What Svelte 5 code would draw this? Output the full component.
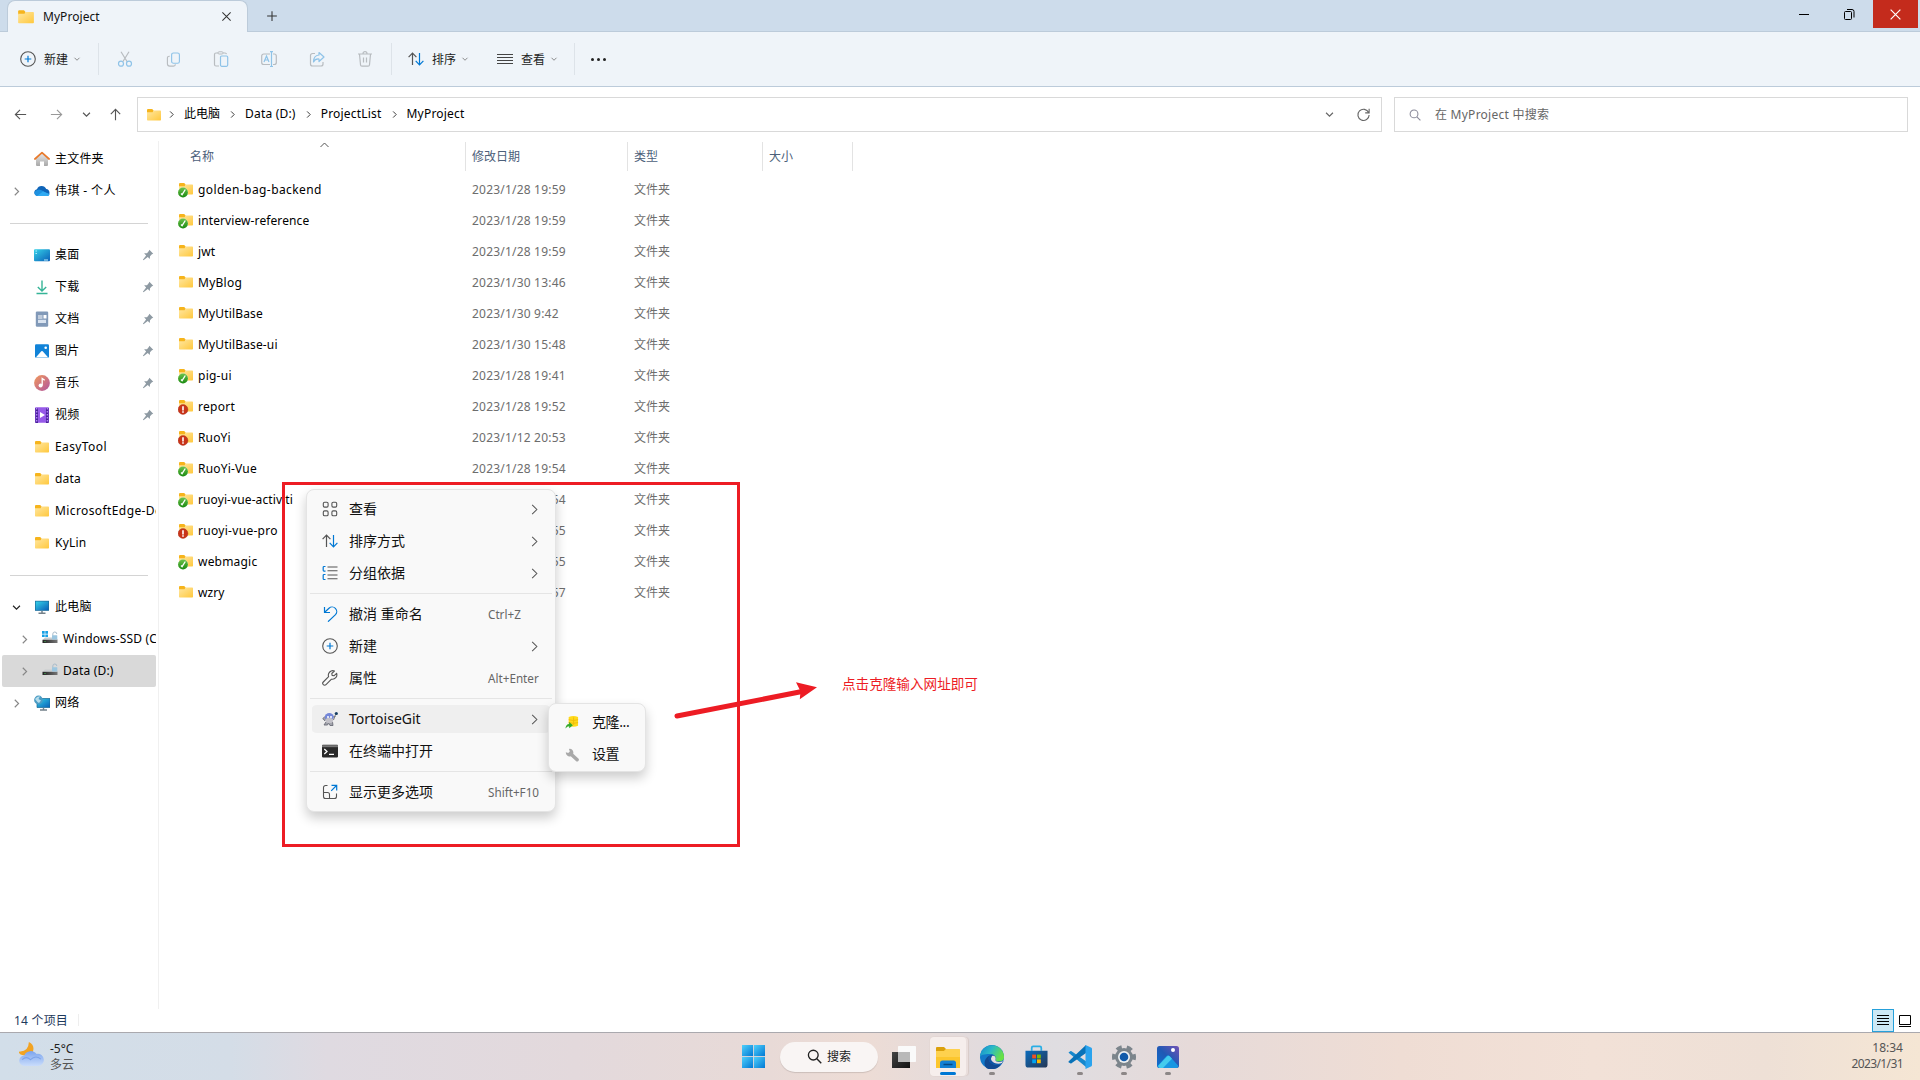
<script>
  // name, modified, badge, letter spacing of the name in px
  const files = [
    ['golden-bag-backend', '2023/1/28 19:59', 'ok', 0.42],
    ['interview-reference', '2023/1/28 19:59', 'ok', 0.1],
    ['jwt', '2023/1/28 19:59', '', 0.1],
    ['MyBlog', '2023/1/30 13:46', '', 0.25],
    ['MyUtilBase', '2023/1/30 9:42', '', 0.15],
    ['MyUtilBase-ui', '2023/1/30 15:48', '', 0.15],
    ['pig-ui', '2023/1/28 19:41', 'ok', 0.25],
    ['report', '2023/1/28 19:52', 'bad', 0.3],
    ['RuoYi', '2023/1/12 20:53', 'bad', 0.15],
    ['RuoYi-Vue', '2023/1/28 19:54', 'ok', 0.2],
    ['ruoyi-vue-activiti', '2023/1/28 19:54', 'ok', 0.1],
    ['ruoyi-vue-pro', '2023/1/28 19:55', 'bad', 0.3],
    ['webmagic', '2023/1/28 19:55', 'ok', 0.2],
    ['wzry', '2023/1/28 19:57', '', 0.1]
  ];
  const tools = ['cut', 'copy', 'paste', 'rename', 'share', 'trash'];
  const side = [
    { icon: 'home', label: '主文件夹' },
    { icon: 'cloud', label: '伟琪 - 个人', chev: 'right', wide: true },
    null,
    { icon: 'desktop', label: '桌面', pin: true },
    { icon: 'download', label: '下载', pin: true },
    { icon: 'doc', label: '文档', pin: true },
    { icon: 'image', label: '图片', pin: true },
    { icon: 'music', label: '音乐', pin: true },
    { icon: 'video', label: '视频', pin: true },
    { icon: 'folder', label: 'EasyTool', wide: true },
    { icon: 'folder', label: 'data' },
    { icon: 'folder', label: 'MicrosoftEdge-Dev', wide: true },
    { icon: 'folder', label: 'KyLin' },
    null,
    { icon: 'pc', label: '此电脑', chev: 'down' },
    { icon: 'ssd', label: 'Windows-SSD (C:)', chev: 'right', nested: true },
    { icon: 'disk', label: 'Data (D:)', chev: 'right', nested: true, selected: true },
    { icon: 'network', label: '网络', chev: 'right' }
  ];
  const menu = [
    { icon: 'grid', label: '查看', sub: true },
    { icon: 'sort', label: '排序方式', sub: true },
    { icon: 'group', label: '分组依据', sub: true },
    null,
    { icon: 'undo', label: '撤消 重命名', key: 'Ctrl+Z' },
    { icon: 'new', label: '新建', sub: true },
    { icon: 'wrench', label: '属性', key: 'Alt+Enter' },
    null,
    { icon: 'tortoise', label: 'TortoiseGit', sub: true, hover: true },
    { icon: 'terminal', label: '在终端中打开' },
    null,
    { icon: 'more', label: '显示更多选项', key: 'Shift+F10' }
  ];
  const crumbs = ['此电脑', 'Data (D:)', 'ProjectList', 'MyProject'];
  const apps = ['edge', 'store', 'vscode', 'settings', 'photos'];
</script>

{#snippet icon(name, size = 16)}
  <svg class="icon" width={size} height={size} viewBox="0 0 16 16"><use href="#{name}" /></svg>
{/snippet}

<svg class="defs" aria-hidden="true">
  <defs>
    <linearGradient id="gFolder" x1="0" y1="0" x2="1" y2="1"><stop offset="0" stop-color="#ffe7a2" /><stop offset="1" stop-color="#ffc83d" /></linearGradient>
    <linearGradient id="gBlue" x1="0" y1="0" x2="1" y2="1"><stop offset="0" stop-color="#35d2e8" /><stop offset="1" stop-color="#0a5fb8" /></linearGradient>
    <linearGradient id="gWin" x1="0" y1="0" x2="1" y2="1"><stop offset="0" stop-color="#4fd0fb" /><stop offset="1" stop-color="#0078d4" /></linearGradient>
    <linearGradient id="gGreen" x1="0" y1="0" x2="0" y2="1"><stop offset="0" stop-color="#6cc24a" /><stop offset="1" stop-color="#1a8a12" /></linearGradient>
    <linearGradient id="gMusic" x1="0" y1="0" x2="1" y2="1"><stop offset="0" stop-color="#f29a5c" /><stop offset="1" stop-color="#b0549f" /></linearGradient>
    <linearGradient id="gCloud" x1="0" y1="0" x2="0" y2="1"><stop offset="0" stop-color="#7ba4ee" /><stop offset="1" stop-color="#c9dcfb" /></linearGradient>
    <linearGradient id="gEdge" x1="0" y1="0" x2="1" y2=".4"><stop offset="0" stop-color="#1589cf" /><stop offset=".5" stop-color="#2bb9c6" /><stop offset="1" stop-color="#68e045" /></linearGradient>
    <linearGradient id="gDark" x1="0" y1="0" x2="1" y2="1"><stop offset="0" stop-color="#444" /><stop offset="1" stop-color="#111" /></linearGradient>
    <linearGradient id="gHouse" x1="0" y1="0" x2="0" y2="1"><stop offset="0" stop-color="#e8e8e8" /><stop offset="1" stop-color="#a8a8a8" /></linearGradient>
    <linearGradient id="gStore" x1="0" y1="0" x2="1" y2="1"><stop offset="0" stop-color="#0a6cbd" /><stop offset="1" stop-color="#263855" /></linearGradient>
    <linearGradient id="gPhoto" x1="0" y1="1" x2="1" y2="0"><stop offset="0" stop-color="#0d70cf" /><stop offset=".5" stop-color="#2059b5" /><stop offset="1" stop-color="#7352b4" /></linearGradient>
    <linearGradient id="gGrayDisk" x1="0" y1="0" x2="1" y2="0"><stop offset="0" stop-color="#222" /><stop offset="1" stop-color="#777" /></linearGradient>

    <symbol id="folder" viewBox="0 0 16 16"><path d="M1 3a1 1 0 0 1 1-1h4.200l1.300 1.600V6H1z" fill="#f6b41c" /><path d="M1 5.200h5.500l1.500-1.700h6.300a.7.700 0 0 1 .7.700v8.600a.7.700 0 0 1-.7.700H1.700a.7.700 0 0 1-.7-.7z" fill="url(#gFolder)" /></symbol>
    <symbol id="ok" viewBox="0 0 16 16"><circle cx="5" cy="10.500" r="5.100" fill="#e8f4dc" /><circle cx="5" cy="10.500" r="4.900" fill="url(#gGreen)" /><path d="M3 11.500l1.100 1.200L7.300 7.500" fill="none" stroke="#fff" stroke-width="1.300" /></symbol>
    <symbol id="bad" viewBox="0 0 16 16"><circle cx="5" cy="10.500" r="4.900" fill="#c93419" stroke="#a12a17" stroke-width=".4" /><path d="M5 7.200v4.200M5 12.300v1.500" stroke="#fff" stroke-width="1.600" /></symbol>
    <symbol id="home" viewBox="0 0 16 16"><path d="M2 7.500L8 2.200l6 5.300V14a1 1 0 0 1-1 1H10v-4.500H6V15H3a1 1 0 0 1-1-1z" fill="url(#gHouse)" /><path d="M.9 8L8 1.600 15.100 8" fill="none" stroke="#e87a2c" stroke-width="1.700" stroke-linecap="round" stroke-linejoin="round" /></symbol>
    <symbol id="cloud" viewBox="0 0 16 16"><path d="M3.500 13A3.400 3.400 0 0 1 3 6.300 5 5 0 0 1 12.200 6 3.600 3.600 0 0 1 13 13z" fill="#0f64b8" /><path d="M3.500 13A3.400 3.400 0 0 1 0.500 9Q4 4.500 9 8l6.500 3.500Q14.500 13 13 13z" fill="#1e91e0" /><path d="M3 13l6-4.500 6.500 2.500Q14.800 13 13 13z" fill="#30aaf2" /></symbol>
    <symbol id="desktop" viewBox="0 0 16 16"><rect y="2.300" width="16" height="12" rx="1" fill="url(#gBlue)" /><path d="M1.500 4h1.400M1.500 6.500h1.400M10 13h4" stroke="#bdf2ff" stroke-width="1" /></symbol>
    <symbol id="download" viewBox="0 0 16 16"><path d="M8 1.500v10M3.800 8L8 12l4.200-4M2.500 14.500h11" fill="none" stroke="#35b497" stroke-width="1.400" /></symbol>
    <symbol id="doc" viewBox="0 0 16 16"><rect x="1.800" y=".5" width="12.400" height="15.200" rx="1.200" fill="#8199b8" /><path d="M4 5h4.500M4 7h4.500" stroke="#fff" /><rect x="9.500" y="4" width="3" height="3.500" fill="#fff" /><rect x="4" y="8.800" width="8" height="3.200" fill="#d9e3f0" /></symbol>
    <symbol id="image" viewBox="0 0 16 16"><rect x="1" y="1.300" width="14" height="13.500" rx="1.200" fill="#1183d8" /><path d="M1.800 14.500L7.300 8.300a1 1 0 0 1 1.400 0l5.500 6.200z" fill="#fff" /><circle cx="11.700" cy="4.700" r="1.300" fill="#fff" /></symbol>
    <symbol id="music" viewBox="0 0 16 16"><circle cx="8" cy="8" r="7.900" fill="url(#gMusic)" /><circle cx="6.600" cy="10.600" r="2" fill="#fff" /><path d="M8.200 10.500V3.500l2.500 1.800" stroke="#fff" stroke-width="1.300" fill="none" /></symbol>
    <symbol id="video" viewBox="0 0 16 16"><rect x="1" y=".3" width="14" height="15.500" rx="1" fill="#9659e8" /><path d="M2.700 1v15M13.300 1v15" stroke="#4a219b" stroke-width="2.600" /><path d="M2.700 1v15M13.300 1v15" stroke="#b68bf4" stroke-width="1.300" stroke-dasharray="1.400 1.600" /><path d="M6 5v6l5-3z" fill="#fff" /></symbol>
    <symbol id="pin" viewBox="0 0 16 16"><path d="M9.800 1l5.200 5.200-1.800.8-2.500 2.500-.3 3.700-2.700-2.500L2 15l-.8-.8L5.500 8.500 2.800 5.800l3.900-.3 2.400-2.700z" fill="#8e9aa3" /></symbol>
    <symbol id="pc" viewBox="0 0 16 16"><path d="M1 1.800h14v10H1z" fill="#1b6c9d" /><path d="M1.700 2.500h12.600v8.600H1.700z" fill="url(#gBlue)" /><path d="M8 12v2M4.500 14.300h7" stroke="#74818a" stroke-width="1.500" /></symbol>
    <symbol id="disk" viewBox="0 0 16 16"><path d="M3 6.500h10.500L16 9H.5z" fill="#c9cdd0" /><rect x=".5" y="8.800" width="15" height="3.200" fill="url(#gGrayDisk)" /><circle cx="3" cy="10.500" r=".6" fill="#50d860" /><path d="M10.800 4.800V3a2 2 0 0 1 4 0" fill="none" stroke="#a9bccb" stroke-width="1" /><rect x="10" y="4.300" width="5.300" height="4.300" rx=".5" fill="#9bc6e0" /></symbol>
    <symbol id="ssd" viewBox="0 0 16 16"><use href="#disk" /><path d="M0 .1h2.700v2.700H0zM3.300.1H6v2.700H3.300zM0 3.400h2.700v2.700H0zM3.300 3.400H6v2.700H3.300z" fill="#18a0e5" /></symbol>
    <symbol id="network" viewBox="0 0 16 16"><path d="M3 3.500h13v9H3z" fill="url(#gBlue)" stroke="#176892" stroke-width=".7" /><path d="M9.500 13v1.500M6 15h7" stroke="#74818a" stroke-width="1.400" /><circle cx="4.500" cy="5" r="4.400" fill="#4c9cc4" /><path d="M1 4Q3 1 6 1.200L4.500 4 7 5.500 5 8Q3 7 1 4" fill="#b5dceb" /></symbol>

    <symbol id="new" viewBox="0 0 16 16"><circle cx="8" cy="8" r="7.300" fill="none" stroke="#555" stroke-width="1.100" /><path d="M8 4.700v6.600M4.700 8h6.600" stroke="#0078d4" stroke-width="1.200" /></symbol>
    <symbol id="cut" viewBox="0 0 16 16"><path d="M4 .8l6.200 10M12 .8L5.800 10.800" fill="none" stroke="#b8bcc0" stroke-width="1.200" /><g fill="none" stroke="#8fc3e8" stroke-width="1.200"><circle cx="4" cy="12.700" r="2.500" /><circle cx="12" cy="12.700" r="2.500" /></g></symbol>
    <symbol id="copy" viewBox="0 0 16 16"><path d="M4 4.500H3.500a2 2 0 0 0-2 2v6a2.500 2.500 0 0 0 2.500 2.500h4a2 2 0 0 0 2-2" fill="none" stroke="#b8bcc0" stroke-width="1.200" /><rect x="6" y="1" width="8.300" height="11" rx="2" fill="none" stroke="#8fc3e8" stroke-width="1.200" /></symbol>
    <symbol id="paste" viewBox="0 0 16 16"><path d="M5 2H3a1.500 1.500 0 0 0-1.500 1.500v10A1.500 1.500 0 0 0 3 15h3M10 2h2a1.500 1.500 0 0 1 1.500 1.200" fill="none" stroke="#b8bcc0" stroke-width="1.200" /><rect x="5" y=".8" width="5" height="2.200" rx="1" fill="none" stroke="#b8bcc0" /><rect x="7.500" y="5" width="7.200" height="10.300" rx="1.200" fill="none" stroke="#8fc3e8" stroke-width="1.200" /></symbol>
    <symbol id="rename" viewBox="0 0 16 16"><path d="M9 3H2.700A2 2 0 0 0 .7 5v6.500a2 2 0 0 0 2 2H9M12 3h1.300a2 2 0 0 1 2 2v6.500a2 2 0 0 1-2 2H12" fill="none" stroke="#b8bcc0" stroke-width="1.200" /><path d="M3 11l2.500-6L8 11M3.800 9h3.400M10.500 1v14.500M9 .7h3M9 15.500h3" fill="none" stroke="#8fc3e8" stroke-width="1.200" /></symbol>
    <symbol id="share" viewBox="0 0 16 16"><path d="M6 2.500H3.500a2 2 0 0 0-2 2V13a2 2 0 0 0 2 2H12a2 2 0 0 0 2-2v-2" fill="none" stroke="#b8bcc0" stroke-width="1.200" /><path d="M10 1.500L15 6l-5 4.500V8Q6 7.700 4.500 11 4.500 4.500 10 4z" fill="none" stroke="#8fc3e8" stroke-width="1.200" stroke-linejoin="round" /></symbol>
    <symbol id="trash" viewBox="0 0 16 16"><path d="M1 3h14M6 2.700a2 2 0 0 1 4 0M2.500 3.200l1 10.600a1.500 1.500 0 0 0 1.500 1.400h6a1.500 1.500 0 0 0 1.500-1.400l1-10.600M6.500 6.500v5M9.500 6.500v5" fill="none" stroke="#b8bcc0" stroke-width="1.200" /></symbol>
    <symbol id="sort" viewBox="0 0 16 16"><path d="M4.500 14V2.300M.6 6.200l3.900-4 3.900 4" fill="none" stroke="#555" stroke-width="1.200" /><path d="M11.500 2v11.700M7.700 9.800l3.800 4 3.900-4" fill="none" stroke="#0078d4" stroke-width="1.200" /></symbol>
    <symbol id="lines" viewBox="0 0 16 16"><path d="M0 3.500h16M0 6.500h16M0 9.500h16M0 12.500h16" stroke="#444" /></symbol>
    <symbol id="left" viewBox="0 0 16 16"><path d="M14 8H2.500M7.500 3L2.500 8l5 5" fill="none" stroke="currentColor" stroke-width="1.200" /></symbol>
    <symbol id="right" viewBox="0 0 16 16"><path d="M2 8h11.500M8.500 3l5 5-5 5" fill="none" stroke="currentColor" stroke-width="1.200" /></symbol>
    <symbol id="up" viewBox="0 0 16 16"><path d="M8 14V2.500M3 7.500l5-5 5 5" fill="none" stroke="currentColor" stroke-width="1.200" /></symbol>
    <symbol id="cdown" viewBox="0 0 16 16"><path d="M3 5.500l5 5 5-5" fill="none" stroke="currentColor" stroke-width="1.700" /></symbol>
    <symbol id="cright" viewBox="0 0 16 16"><path d="M5.500 2.500L11 8l-5.500 5.500" fill="none" stroke="currentColor" stroke-width="1.700" /></symbol>
    <symbol id="thin" viewBox="0 0 16 16"><path d="M5.500 3l5 5-5 5" fill="none" stroke="currentColor" stroke-width="1.100" /></symbol>
    <symbol id="refresh" viewBox="0 0 16 16"><path d="M13.500 6A6 6 0 1 0 14 8.500M14 1.800v4.400H9.800" fill="none" stroke="#666" stroke-width="1.200" /></symbol>
    <symbol id="search" viewBox="0 0 16 16"><circle cx="6.700" cy="6.500" r="5.200" fill="none" stroke="currentColor" stroke-width="1.400" /><path d="M10.500 10.500l4.700 4.700" stroke="currentColor" stroke-width="1.500" /></symbol>
    <symbol id="x" viewBox="0 0 16 16"><path d="M2 2l12 12M14 2L2 14" stroke="currentColor" stroke-width="1.500" /></symbol>
    <symbol id="plus" viewBox="0 0 16 16"><path d="M8 1.500v13M1.500 8h13" stroke="#333" stroke-width="1.400" /></symbol>

    <symbol id="grid" viewBox="0 0 16 16"><g fill="none" stroke="#555" stroke-width="1.100"><rect x="1.300" y="1.300" width="4.800" height="4.800" rx="1.300" /><rect x="9.900" y="1.300" width="4.800" height="4.800" rx="1.300" /><rect x="1.300" y="9.900" width="4.800" height="4.800" rx="1.300" /><rect x="9.900" y="9.900" width="4.800" height="4.800" rx="1.300" /></g></symbol>
    <symbol id="group" viewBox="0 0 16 16"><path d="M3.500 1.500h-1.500a.8.800 0 0 0-.8.800v3a.8.800 0 0 0 .8.800h1.500M3.500 9.500h-1.500a.8.800 0 0 0-.8.800v3.400a.8.800 0 0 0 .8.800h1.500" fill="none" stroke="#0078d4" stroke-width="1.200" /><path d="M5.500 2h10M5.500 5.700h10M5.500 10h10M5.500 13.700h10" stroke="#555" stroke-width="1.100" /></symbol>
    <symbol id="undo" viewBox="0 0 16 16"><path d="M2.500 1v5.500H8M2.700 6.200L7 2.200a4.600 4.600 0 0 1 6.500 6.500L6 15.700" fill="none" stroke="#0078d4" stroke-width="1.200" /></symbol>
    <symbol id="wrench" viewBox="0 0 16 16"><path d="M14.600 3.300l-2.700 2.500-1.800-.4-.3-1.900L12.400 1A4.500 4.500 0 0 0 6.600 6.700L1.300 12a1.900 1.900 0 0 0 2.700 2.700l5.500-5.500a4.500 4.500 0 0 0 5.100-5.900z" fill="none" stroke="#555" stroke-width="1.100" stroke-linejoin="round" /></symbol>
    <symbol id="tortoise" viewBox="0 0 16 16"><path d="M3 10L.8 7.500 2.500 6l3 2M10 6l3.500-.5M4 11l-2 3h3.500l1-2 1.500 2.500h3L10.500 11" fill="#a2a4ac" stroke="#6b6d78" stroke-width=".9" /><ellipse cx="7.300" cy="6" rx="4.500" ry="4" fill="#7487d8" /><ellipse cx="7.300" cy="9.500" rx="3.800" ry="2.800" fill="#c2c1c8" /><circle cx="6" cy="6" r="1" fill="#fff" /><circle cx="9" cy="6" r="1" fill="#fff" /><path d="M11.500 9l2-5.500" stroke="#777" /><circle cx="14.300" cy="2.500" r="1.600" fill="#173f63" /></symbol>
    <symbol id="terminal" viewBox="0 0 16 16"><rect y="1.800" width="16" height="12.600" rx=".8" fill="#292929" /><path d="M0 3.200h16" stroke="#777" stroke-width="2" /><path d="M2.300 6l2.700 2.500L2.300 11M7 11.300h5" fill="none" stroke="#fff" stroke-width="1.300" /></symbol>
    <symbol id="more" viewBox="0 0 16 16"><path d="M5.500 1.500H3.500a2 2 0 0 0-2 2v9a2 2 0 0 0 2 2h9a2 2 0 0 0 2-2V9.500M1.500 8.500h4a2 2 0 0 1 2 2v4" fill="none" stroke="#555" stroke-width="1.100" /><path d="M9.200 6.800l5.300-5.300M9.500 1.300h5.200v5.200" fill="none" stroke="#0078d4" stroke-width="1.200" /></symbol>
    <symbol id="clone" viewBox="0 0 16 16"><path d="M5 2.200Q10 0 15 2.200v9.300q-5 2-10 0z" fill="#ffd91a" /><path d="M5 5q5 1.800 10 0M5 8q5 1.800 10 0M10.200 2.500v8" fill="none" stroke="#efbd0b" /><path d="M1.500 14.500Q2 9.500 5.500 9.500V7.500l4 3.500-4 3v-2Q3.500 12 1.500 14.500" fill="#35ab2b" /></symbol>
    <symbol id="spanner" viewBox="0 0 16 16"><path d="M2 5.500l2.500.8 1.700-1.600-.9-2.700a4 4 0 0 1 4.500 5.100l5.500 5.200a1.800 1.800 0 0 1-2.600 2.600L7.200 9.800A4 4 0 0 1 2 5.500" fill="#a9a9a9" /></symbol>

    <symbol id="windows" viewBox="0 0 16 16"><rect width="7.700" height="7.700" fill="url(#gWin)" /><rect x="8.300" width="7.700" height="7.700" fill="url(#gWin)" /><rect y="8.300" width="7.700" height="7.700" fill="url(#gWin)" /><rect x="8.300" y="8.300" width="7.700" height="7.700" fill="url(#gWin)" /></symbol>
    <symbol id="tasks" viewBox="0 0 24 24"><rect y="7" width="18" height="16" fill="url(#gDark)" /><rect x="6" y="1" width="18" height="16" rx=".7" fill="#fafafa" /><path d="M6 7h12v10H6z" fill="#b9b9b9" /></symbol>
    <symbol id="explorer" viewBox="0 0 24 24"><path d="M0 3a1 1 0 0 1 1-1h7l2 2v4H0z" fill="#dba00c" /><path d="M0 6h8l2-2h13a1 1 0 0 1 1 1v18H0z" fill="#fcc62d" /><path d="M0 6h8l2-2h13a1 1 0 0 1 1 1v7H0z" fill="#ffd55c" opacity=".7" /><path d="M4 23v-5a2.500 2.500 0 0 1 2.500-2.500h11A2.500 2.500 0 0 1 20 18v5z" fill="#1380d4" /><path d="M7.500 19.500h9" stroke="#064983" stroke-width="1.500" /></symbol>
    <symbol id="edge" viewBox="0 0 24 24"><circle cx="12" cy="12" r="12" fill="#1379c9" /><path d="M0 12A12 12 0 0 1 24 12.500c0 5-9 5-8.500 2.500.8-3.500-1.500-6-5-6S1 9 0 12" fill="url(#gEdge)" /><path d="M8.500 24C3 22 3 14 9.500 10.500 6.500 17 13 21.500 21 19.500 18 23.500 13 25 8.500 24" fill="#124a91" /><path d="M9.500 10.500c3-2 7 .5 6 4-.4 1 .3 2 2 2.300L23.500 16l-2 3c-6 2-13-.5-13-5 0-1.500.5-2.500 1-3.500" fill="#1053a3" /><path d="M12 11c2.500-1 4.300 1.300 3.500 3.500-.5 2 2 3.500 7.500 1.800l-1 1.700c-6 2-11-1-11-4.500z" fill="#e4dfe0" /></symbol>
    <symbol id="store" viewBox="0 0 24 24"><path d="M7 6V3a1.500 1.500 0 0 1 1.500-1.500h7A1.500 1.500 0 0 1 17 3v3" fill="none" stroke="#28aee5" stroke-width="1.800" /><path d="M.5 6h23v14.500a3 3 0 0 1-3 3h-17a3 3 0 0 1-3-3z" fill="url(#gStore)" /><path d="M7.500 10h4v4h-4z" fill="#f25022" /><path d="M12.500 10h4v4h-4z" fill="#7fba00" /><path d="M7.500 15h4v4h-4z" fill="#00a4ef" /><path d="M12.500 15h4v4h-4z" fill="#ffb900" /></symbol>
    <symbol id="vscode" viewBox="0 0 24 24"><path d="M1.500 8.500L18 22l4-3L3.500 6.200a1 1 0 0 0-1.200 0L.5 7.500z" fill="#1688cd" /><path d="M.5 16.500L18 0v8L3.500 18.200a1 1 0 0 1-1.200 0l-1.800-1z" fill="#0872b8" /><path d="M17.500 0L23 2.500a1.500 1.500 0 0 1 1 1.400v16.200a1.500 1.500 0 0 1-1 1.400L17.500 24z" fill="#2aa3ee" /></symbol>
    <symbol id="settings" viewBox="0 0 24 24"><circle cx="12" cy="12" r="9" fill="#7c858c" /><circle cx="12" cy="12" r="10" fill="none" stroke="#7c858c" stroke-width="4" stroke-dasharray="5.500 4.970" transform="rotate(-16 12 12)" /><circle cx="12" cy="12" r="6" fill="#edf0f2" /><circle cx="12" cy="12" r="4.300" fill="#125baa" /></symbol>
    <symbol id="photos" viewBox="0 0 24 24"><rect x="1" y="1" width="22" height="22" rx="2.500" fill="url(#gPhoto)" /><path d="M1.500 21L10.500 11a2 2 0 0 1 3 0l9 10-1.500 2H3z" fill="#1796e2" /><path d="M2 21l9-9.500a2 2 0 0 1 3 0l2 2.200L7 23H3.500z" fill="#43cbed" /><circle cx="17" cy="5" r="2" fill="#fff" /></symbol>
    <symbol id="weather" viewBox="0 0 24 24"><path d="M9.500 0q6 3 3.800 9.500Q9 15 1.500 12-1 10 .5 9 9 9.500 9.500 0" fill="#f2a322" /><path d="M5.500 23A5 5 0 0 1 5 13a7 7 0 0 1 12-1.500A5.800 5.800 0 1 1 18 23z" fill="url(#gCloud)" /><path d="M3 17q4-4 8 0 5-5 10-.5" fill="none" stroke="#7ca3e9" stroke-width="1" /></symbol>
  </defs>
</svg>

<div class="screen">
  <header class="titlebar">
    <div class="tab">
      {@render icon('folder', 18)}<span>MyProject</span>
      <i class="tabclose">{@render icon('x', 11)}</i>
    </div>
    <i class="plus">{@render icon('plus', 12)}</i>
    <div class="controls">
      <span class="ctl"><svg width="11" height="11"><path d="M0 5.500h10" stroke="#000" /></svg></span>
      <span class="ctl"><svg width="11" height="11"><rect x=".5" y="2.500" width="7" height="8" rx="1" fill="none" stroke="#000" /><path d="M3 .5h5a2 2 0 0 1 2 2V8.500" fill="none" stroke="#000" /></svg></span>
      <span class="ctl close">{@render icon('x', 13)}</span>
    </div>
  </header>

  <div class="toolbar">
    <div class="cmd new">{@render icon('new')}<span>新建</span>{@render icon('cdown', 8)}</div>
    <div class="tools">
      {#each tools as t}<span>{@render icon(t, t === 'copy' ? 15 : 16)}</span>{/each}
    </div>
    <div class="cmd sortcmd">{@render icon('sort')}<span>排序</span>{@render icon('cdown', 8)}</div>
    <div class="cmd viewcmd">{@render icon('lines')}<span>查看</span>{@render icon('cdown', 8)}</div>
    <div class="dots"><b></b><b></b><b></b></div>
  </div>

  <div class="nav">
    <div class="arrows">
      <span>{@render icon('left', 15)}</span>
      <span class="dim">{@render icon('right', 15)}</span>
      <span>{@render icon('cdown', 11)}</span>
      <span>{@render icon('up', 15)}</span>
    </div>
    <div class="address">
      {@render icon('folder')}
      {#each crumbs as c}
        <i>{@render icon('cright', 9)}</i><span>{c}</span>
      {/each}
      <div class="addrend">{@render icon('cdown', 11)}{@render icon('refresh', 15)}</div>
    </div>
    <div class="searchbox">{@render icon('search', 12)}<span>在 MyProject 中搜索</span></div>
  </div>

  <main>
    <aside>
      {#each side as s}
        {#if s}
          <div class="item" class:nested={s.nested} class:selected={s.selected}>
            <span class="chev" class:dark={s.chev === 'down'}>{#if s.chev}{@render icon(s.chev === 'down' ? 'cdown' : 'cright', 11)}{/if}</span>
            {@render icon(s.icon)}
            <span class="label" class:wide={s.wide}>{s.label}</span>
            {#if s.pin}<span class="pin">{@render icon('pin', 12)}</span>{/if}
          </div>
        {:else}
          <div class="rule"></div>
        {/if}
      {/each}
    </aside>

    <section class="list">
      <div class="head">
        <span class="h-name">名称<i class="caret"><svg width="9" height="6"><path d="M.5 5l4-4 4 4" fill="none" stroke="#555" /></svg></i></span>
        <span>修改日期</span><span>类型</span><span>大小</span>
      </div>
      {#each files as [name, date, state, spacing]}
        <div class="row">
          <span class="name" style:letter-spacing="{spacing}px">
            <svg width="16" height="18" viewBox="0 0 16 18"><use href="#folder" width="16" height="16" />{#if state}<use href="#{state}" y="1" width="16" height="16" />{/if}</svg>
            {name}
          </span>
          <span class="date">{date}</span><span>文件夹</span>
        </div>
      {/each}
    </section>
  </main>

  <footer class="status">
    <span class="count">14 个项目</span>
    <span class="view on"><svg width="12" height="11"><path d="M0 .5h12M0 3.500h12M0 6.500h12M0 9.500h12" stroke="#000" /></svg></span>
    <span class="view"><svg width="12" height="12"><path d="M.5.500h11v9H.5zM0 11.500h12" fill="none" stroke="#000" /></svg></span>
  </footer>

  <div class="taskbar">
    <div class="weather">{@render icon('weather', 25)}<div><b>-5°C</b><span>多云</span></div></div>
    <div class="apps">
      <span class="start">{@render icon('windows', 23)}</span>
      <div class="pill">{@render icon('search', 15)}<span>搜索</span></div>
      <span class="app">{@render icon('tasks', 24)}</span>
      <span class="app active">{@render icon('explorer', 24)}<i></i></span>
      {#each apps as a}
        <span class="app">{@render icon(a, a === 'store' ? 23 : 24)}{#if a !== 'store'}<i></i>{/if}</span>
      {/each}
    </div>
    <div class="clock"><span>18:34</span><span class="day">2023/1/31</span></div>
  </div>

  <div class="menu">
    {#each menu as m}
      {#if m}
        <div class="mi" class:hover={m.hover}>
          {@render icon(m.icon)}<span>{m.label}</span>
          {#if m.key}<kbd>{m.key}</kbd>{/if}
          {#if m.sub}<em>{@render icon('thin', 15)}</em>{/if}
        </div>
      {:else}
        <hr />
      {/if}
    {/each}
  </div>
  <div class="submenu">
    <div class="mi">{@render icon('clone', 15)}<span>克隆...</span></div>
    <div class="mi">{@render icon('spanner', 15)}<span>设置</span></div>
  </div>

  <div class="frame"></div>
  <svg class="arrow" width="150" height="50"><path d="M7 36L132 11.500" stroke="#ed1c24" stroke-width="5" stroke-linecap="round" /><path d="M126 2.300l21 5-17.200 12 .7-8z" fill="#ed1c24" /></svg>
  <div class="note">点击克隆输入网址即可</div>
</div>

<style>
  :global(body) { margin: 0; overflow: hidden; }
  .defs { position: absolute; width: 0; height: 0; }
  .screen { position: relative; width: 1920px; height: 1080px; display: flex; flex-direction: column; overflow: hidden; background: #fff; color: #000; font: 12px/16px "Noto Sans", "Noto Sans CJK SC", sans-serif; white-space: nowrap; box-sizing: border-box; }
  .screen * { box-sizing: border-box; }
  svg { display: block; flex: none; }
  i, em { font-style: normal; }

  .titlebar { height: 32px; flex: none; display: flex; background: #cddceb; border-bottom: 1px solid #bccbda; padding-left: 7px; }
  .tab { width: 241px; height: 32px; display: flex; align-items: center; padding: 0 15px 0 9px; background: #eff4f9; border: 1px solid #bccbda; border-bottom: 0; border-radius: 8px 8px 0 0; color: #111; }
  .tab span { margin-left: 8px; letter-spacing: .05px; }
  .tabclose { margin-left: auto; color: #333; }
  .plus { margin: 10px 0 0 18px; }
  .controls { margin-left: auto; display: flex; padding-right: 2px; }
  .ctl { width: 45px; height: 28px; display: grid; place-items: center; padding-right: 2px; }
  .close { background: #c42b1c; color: #fff; padding-right: 1px; }

  .toolbar { height: 55px; flex: none; display: flex; align-items: center; background: #eff4f9; border-bottom: 1px solid #bccbda; }
  .cmd { display: flex; align-items: center; color: #222; }
  .cmd span { margin: 1px 5px 0 8px; }
  .new { width: 99px; height: 32px; padding-left: 20px; border-right: 1px solid #dde3e9; }
  .cmd :global(.icon + span + .icon) { color: #777; }
  .tools { width: 293px; height: 32px; display: flex; padding-left: 2px; border-right: 1px solid #dde3e9; }
  .tools span { width: 48px; height: 32px; display: grid; place-items: center; }
  .sortcmd { width: 105px; padding-left: 16px; }
  .viewcmd { width: 78px; height: 32px; border-right: 1px solid #dde3e9; }
  .dots { display: flex; gap: 3px; padding: 1px 0 0 16px; }
  .dots b { width: 3px; height: 3px; border-radius: 50%; background: #222; }

  .nav { height: 54px; flex: none; display: flex; padding-top: 10px; }
  .arrows { width: 137px; height: 34px; display: flex; align-items: center; color: #555; }
  .arrows span { display: grid; place-items: center; width: 32px; }
  .arrows span:first-child { width: 40px; }
  .arrows span:nth-child(3) { width: 28px; }
  .arrows span:nth-child(4) { width: 30px; }
  .arrows .dim { color: #999; }
  .address { width: 1245px; height: 35px; border: 1px solid #d9d9d9; display: flex; align-items: center; padding: 0 10px 0 8px; }
  .address i { width: 25px; display: grid; place-items: center; color: #333; }
  .address > :global(.icon) { margin-right: -3px; }
  .address span { letter-spacing: .2px; padding-bottom: 1px; }
  .address span:nth-of-type(1) { letter-spacing: 0; }
  .addrend { margin-left: auto; display: flex; align-items: center; gap: 21px; color: #666; }
  .searchbox { width: 514px; height: 35px; margin-left: 12px; border: 1px solid #d9d9d9; display: flex; align-items: center; padding-left: 14px; color: #8a8a9a; }
  .searchbox span { margin-left: 14px; color: #666; letter-spacing: .25px; }

  main { flex: 1; display: flex; min-height: 0; }
  aside { width: 159px; height: 868px; padding-top: 2px; border-right: 1px solid #f0f0f0; overflow: hidden; }
  .item { height: 32px; margin-left: 2px; width: 154px; display: flex; align-items: center; overflow: hidden; }
  .chev { width: 32px; padding-left: 9px; color: #888; flex: none; }
  .dark { color: #222; }
  .nested .chev { width: 40px; padding-left: 17px; }
  .label { margin-left: 5px; letter-spacing: .2px; }
  .wide { letter-spacing: .4px; }
  .pin { margin-left: auto; padding-right: 2px; }
  .selected { background: #d9d9d9; border-radius: 2px; }
  .rule { height: 1px; margin: 16px 0 15px 10px; width: 138px; background: #d4d4d4; }
  .list { flex: 1; }
  .head { display: grid; grid-template-columns: 307px 162px 135px 90px; height: 29px; margin-top: 1px; color: #4c607a; }
  .head span { border-right: 1px solid #e3e3e3; padding: 7px 0 0 6px; }
  .head .h-name { position: relative; padding-left: 31px; }
  .caret { position: absolute; left: 161px; top: 0; }
  .row { height: 31px; display: grid; grid-template-columns: 307px 162px 135px; align-items: center; color: #6d6d6d; }
  .list .row:nth-child(2) { margin-top: 3px; }
  .row > span { padding-left: 6px; }
  .row .date { letter-spacing: .2px; }
  .row .name { display: flex; align-items: center; gap: 4px; padding-left: 19px; color: #000; }

  .status { height: 23px; flex: none; display: flex; padding-right: 4px; color: #1e395b; }
  .count { width: 79px; height: 12px; margin-top: 5px; padding-left: 14px; line-height: 14px; letter-spacing: .2px; border-right: 1px solid #eee; margin-right: auto; }
  .view { width: 22px; height: 23px; display: grid; place-items: center; }
  .on { background: #cce8f5; border: 1px solid #26a0da; }
  .taskbar { height: 48px; flex: none; position: relative; border-top: 1px solid #aaa9ae; display: flex; justify-content: space-between; background: linear-gradient(90deg, #d2dee9 0%, #d4dde7 12%, #dfdae1 17%, #e3d9dc 30%, #e8dad7 40%, #eddcd5 45%, #e2dbdd 51%, #dfdde1 55%, #e6dad9 62%, #efddd4 73%, #f2e1d7 83%, #eee0d6 92%, #f5e6d4 100%); }
  .weather { width: 120px; display: flex; padding: 9px 0 0 19px; gap: 6px; color: #222; }
  .weather b { display: block; font-weight: 400; line-height: 13px; }
  .weather span { display: block; color: #555; line-height: 19px; }
  .apps { display: flex; align-items: center; height: 47px; padding-left: 12px; }
  .start { width: 38px; }
  .pill { width: 98px; height: 30px; margin-right: 4px; border-radius: 15px; background: #f9f5f4; box-shadow: 0 1px 1px #0002; display: flex; align-items: center; gap: 5px; padding-left: 27px; color: #222; }
  .app { position: relative; width: 44px; height: 46px; display: grid; place-items: center; }
  .app i { position: absolute; bottom: 5px; left: 19px; width: 6px; height: 3px; border-radius: 2px; background: #8c8787; }
  .active { width: 36px; height: 39px; margin: 0 4px; background: #f6eeec; border-radius: 4px; box-shadow: 2px 0 0 #eadfdd, 3px 0 1px #d8cac7, 0 0 0 1px #e4d8d5; }
  .active i { width: 16px; left: 10px; bottom: 1px; background: #0078d4; }
  .clock { width: 120px; display: flex; flex-direction: column; text-align: right; padding: 7px 17px 0 0; color: #555; }
  .day { letter-spacing: -.6px; }

  .menu, .submenu { position: absolute; background: #f9f9f9; border: 1px solid #e4e4e4; border-radius: 8px; box-shadow: 0 6px 12px #0003; font-size: 14px; color: #111; }
  .menu { left: 306px; top: 489px; width: 250px; height: 323px; padding: 3px 5px; }
  .mi { height: 32px; display: flex; align-items: center; padding-left: 10px; position: relative; border-top: 2px solid transparent; border-bottom: 2px solid transparent; background-clip: padding-box; border-radius: 5px; }
  .mi span { margin-left: 11px; padding-bottom: 1px; }
  .mi kbd { position: absolute; left: 176px; font: 11.700px "Noto Sans", sans-serif; color: #666; }
  .mi em { position: absolute; right: 8px; color: #555; }
  .hover { background-color: #efefef; }
  hr { height: 1px; border: 0; background: #e5e5e5; margin: 4px -2px; }
  .submenu { left: 548px; top: 703px; width: 98px; height: 69px; padding: 2px 5px; }
  .submenu .mi span { margin-left: 13px; letter-spacing: -.4px; }
  .frame { position: absolute; left: 282px; top: 482px; width: 458px; height: 365px; border: 3px solid #ed1c24; }
  .arrow { position: absolute; left: 670px; top: 680px; }
  .note { position: absolute; left: 842px; top: 674px; font-size: 13.600px; line-height: 19px; color: #ed1c24; }
</style>
